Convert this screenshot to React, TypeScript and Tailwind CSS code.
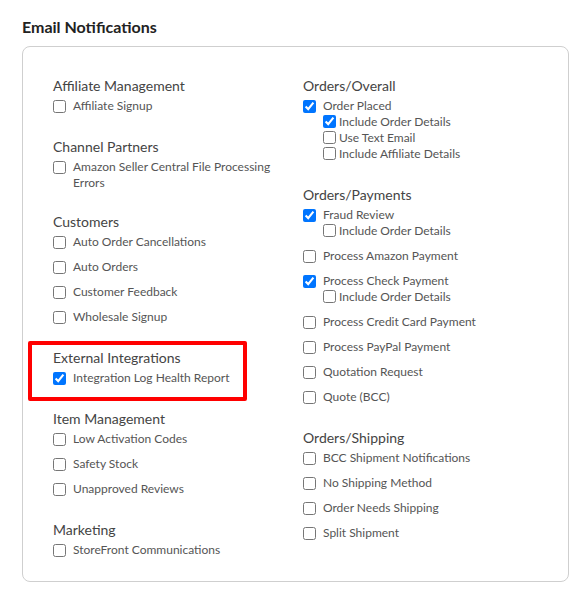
import React from "react";

type Item = {
  label: string;
  checked?: boolean;
  wraps?: boolean;
  sub?: { label: string; checked?: boolean }[];
};
type Group = { title: string; items: Item[]; highlight?: boolean };

const left: Group[] = [
  { title: "Affiliate Management", items: [{ label: "Affiliate Signup" }] },
  { title: "Channel Partners", items: [{ label: "Amazon Seller Central File Processing Errors", wraps: true }] },
  {
    title: "Customers",
    items: [
      { label: "Auto Order Cancellations" },
      { label: "Auto Orders" },
      { label: "Customer Feedback" },
      { label: "Wholesale Signup" },
    ],
  },
  {
    title: "External Integrations",
    highlight: true,
    items: [{ label: "Integration Log Health Report", checked: true }],
  },
  {
    title: "Item Management",
    items: [{ label: "Low Activation Codes" }, { label: "Safety Stock" }, { label: "Unapproved Reviews" }],
  },
  { title: "Marketing", items: [{ label: "StoreFront Communications" }] },
];

const right: Group[] = [
  {
    title: "Orders/Overall",
    items: [
      {
        label: "Order Placed",
        checked: true,
        sub: [
          { label: "Include Order Details", checked: true },
          { label: "Use Text Email" },
          { label: "Include Affiliate Details" },
        ],
      },
    ],
  },
  {
    title: "Orders/Payments",
    items: [
      { label: "Fraud Review", checked: true, sub: [{ label: "Include Order Details" }] },
      { label: "Process Amazon Payment" },
      { label: "Process Check Payment", checked: true, sub: [{ label: "Include Order Details" }] },
      { label: "Process Credit Card Payment" },
      { label: "Process PayPal Payment" },
      { label: "Quotation Request" },
      { label: "Quote (BCC)" },
    ],
  },
  {
    title: "Orders/Shipping",
    items: [
      { label: "BCC Shipment Notifications" },
      { label: "No Shipping Method" },
      { label: "Order Needs Shipping" },
      { label: "Split Shipment" },
    ],
  },
];

function Box({ checked }: { checked?: boolean }) {
  return (
    <input
      type="checkbox"
      defaultChecked={checked}
      className="m-0 h-[13px] w-[13px] shrink-0 accent-[#0075ff]"
    />
  );
}

function Row({ item }: { item: Item }) {
  return (
    <div className={item.wraps ? "mb-[5px] flex flex-col pt-[2px]" : "mb-[7px] flex flex-col pt-[2px]"}>
      <label className="flex items-start gap-[7px] text-[12px] leading-[16px] text-[#555]">
        <span className="mt-[2px] flex">
          <Box checked={item.checked} />
        </span>
        <span>{item.label}</span>
      </label>
      {item.sub && (
        <div className="pl-[20px]">
          {item.sub.map((s) => (
            <label key={s.label} className="flex items-start gap-[3px] text-[12px] leading-[16px] text-[#555]">
              <span className="mt-[1px] flex">
                <Box checked={s.checked} />
              </span>
              <span>{s.label}</span>
            </label>
          ))}
        </div>
      )}
    </div>
  );
}

function GroupBlock({ group }: { group: Group }) {
  return (
    <div className="relative mb-[16px] flex flex-col">
      {group.highlight && (
        <div className="pointer-events-none absolute -left-[25px] -top-[7px] h-[60px] w-[219px] rounded-[2px] border-[4px] border-[#ff0000]" />
      )}
      <div className="text-[14px] leading-[20px] text-[#444]">{group.title}</div>
      {group.items.map((it) => (
        <Row key={it.label} item={it} />
      ))}
    </div>
  );
}

export default function App() {
  return (
    <div className="min-h-screen bg-white" style={{ fontFamily: "Lato, 'Open Sans', sans-serif" }}>
      <div className="pl-[22px] pr-[10px] pt-[15px]">
        <h2 className="text-[16px] font-bold leading-[24px] text-[#222]">Email Notifications</h2>
        <div className="mt-[7px] flex w-[547px] rounded-[8px] border border-[#cfcfcf] pl-[30px] pt-[29px]">
          <div className="flex w-[250px] flex-col">
            {left.map((g) => (
              <GroupBlock key={g.title} group={g} />
            ))}
          </div>
          <div className="flex flex-1 flex-col">
            {right.map((g) => (
              <GroupBlock key={g.title} group={g} />
            ))}
          </div>
        </div>
      </div>
    </div>
  );
}
